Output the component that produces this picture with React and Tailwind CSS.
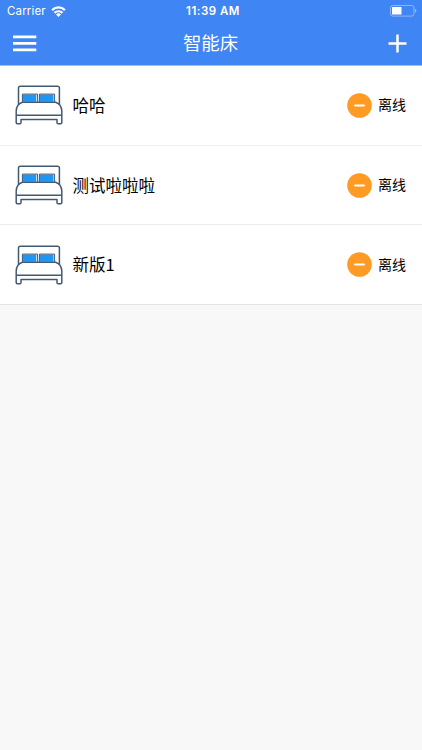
const devices = [
    { id: 1, name: "哈哈", status: "离线" },
    { id: 2, name: "测试啦啦啦", status: "离线" },
    { id: 3, name: "新版1", status: "离线" },
];

const WifiIcon = () => (
    <svg width="15" height="11" viewBox="0 0 15 11" fill="none" stroke="#fff" strokeWidth="2.2" className="mb-px">
        <path d="M1.100 4.100a9.100 9.100 0 0 1 12.800 0" />
        <path d="M3.500 6.900a5.700 5.700 0 0 1 8 0" />
        <path d="M7.500 10.900 5 8.500a3.500 3.500 0 0 1 5 0z" fill="#fff" stroke="none" />
    </svg>
);

const BatteryIcon = () => (
    <svg width="27" height="12" viewBox="0 0 27 12" fill="none">
        <rect x="0.5" y="0.5" width="23.4" height="10.6" rx="2.2" stroke="#fff" strokeOpacity="0.4" />
        <rect x="2" y="2" width="9.5" height="7.4" rx="0.5" fill="#fff" />
        <path d="M25 4v3.7c.9-.3 1.4-1 1.4-1.85S25.9 4.3 25 4z" fill="#fff" fillOpacity="0.45" />
    </svg>
);

const BedIcon = () => (
    <svg width="48" height="40" viewBox="0 0 48 40" fill="none" stroke="#435a75" strokeWidth="1.5" strokeLinejoin="round">
        <path d="M3.500 19.500V3.100a1.800 1.800 0 0 1 1.800-1.800h37.300a1.800 1.800 0 0 1 1.800 1.800v16.400" />
        <path d="M7.400 9.400h13.900v7.400H7.400zM24.600 9.400h13.900v7.400H24.600z" fill="#2196f3" stroke="none" />
        <path d="M7.400 17V9.100h15.200V17M24.400 17V9.100h15.200V17" strokeWidth="1" />
        <path d="M7.400 17.200h33.200c3.700 1.300 6.200 4.800 6.200 9v11.400a1.200 1.200 0 0 1-1.200 1.200h-2.400a1.200 1.200 0 0 1-1.200-1.200v-3.200H6v3.200a1.200 1.200 0 0 1-1.200 1.200H2.400a1.200 1.200 0 0 1-1.200-1.200V26.200c0-4.200 2.500-7.700 6.200-9z" />
        <path d="M1.200 30.300h45.600" />
    </svg>
);

const StatusBar = () => (
    <div className="grid h-[22px] grid-cols-3 items-center pl-[7px] pr-[5px] text-[11.5px] leading-none">
        <div className="flex items-center gap-[5px] pt-px">
            <span className="tracking-[0.15px]">Carrier</span>
            <WifiIcon />
        </div>
        <span className="pl-[2px] pt-px text-center font-semibold tracking-[0.5px] whitespace-nowrap">11:39 AM</span>
        <div className="flex justify-end">
            <BatteryIcon />
        </div>
    </div>
);

const NavBar = () => (
    <div className="grid h-[43px] grid-cols-3 items-center pl-[13px] pr-[15px]">
        <button aria-label="menu">
            <svg width="24" height="17" viewBox="0 0 24 17" fill="#fff">
                <path d="M0 .5h23.300v2.700H0zM0 7h23.300v2.700H0zM0 13.500h23.300v2.700H0z" />
            </svg>
        </button>
        <h1 className="pl-px text-center text-[18.400px] leading-none">智能床</h1>
        <button aria-label="add" className="justify-self-end">
            <svg width="19" height="19" viewBox="0 0 19 19" stroke="#fff" strokeWidth="2.500">
                <path d="M9.500 .5v18M.5 9.500h18" />
            </svg>
        </button>
    </div>
);

const DeviceRow = ({ device }) => (
    <li className="flex h-[79.700px] items-center border-b border-[#ededed] bg-white pl-[15px] pr-4 last:border-[#e4e4e4]">
        <BedIcon />
        <span className="ml-[9.500px] flex-1 font-['Noto_Sans_CJK_SC',sans-serif] text-[16.500px] leading-none">{device.name}</span>
        <svg width="25" height="25" viewBox="0 0 25 25">
            <circle cx="12.500" cy="12.500" r="12.300" fill="#ff9a24" />
            <path d="M8 12.500h9" stroke="#fff" strokeWidth="2" strokeLinecap="round" />
        </svg>
        <span className="ml-[6px] text-[14px] leading-none">{device.status}</span>
    </li>
);

export default function App() {
    return (
        <div className="h-[750px] w-full overflow-hidden bg-[#f8f8f8] font-[Inter,'Noto_Sans_CJK_SC',sans-serif] text-black">
            <header className="border-b border-[#9cc2fa] bg-[#3f85f4] text-white">
                <StatusBar />
                <NavBar />
            </header>
            <ul>
                {devices.map(device => (
                    <DeviceRow key={device.id} device={device} />
                ))}
            </ul>
        </div>
    );
}
